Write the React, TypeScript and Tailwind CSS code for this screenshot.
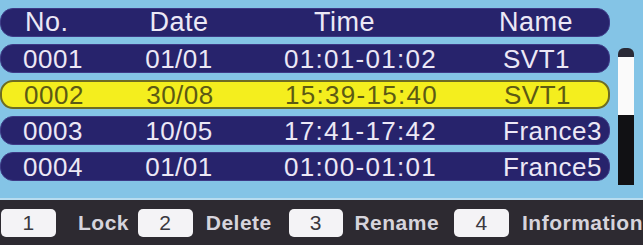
import React from "react";

const ROWS = [
  { no: "0001", date: "01/01", time: "01:01-01:02", name: "SVT1" },
  { no: "0002", date: "30/08", time: "15:39-15:40", name: "SVT1", active: true },
  { no: "0003", date: "10/05", time: "17:41-17:42", name: "France3" },
  { no: "0004", date: "01/01", time: "01:00-01:01", name: "France5" },
];

const FONT = { fontFamily: '"Liberation Sans", Arial, sans-serif' };

function Cells({ no, date, time, name }: { no: string; date: string; time: string; name: string }) {
  return (
    <>
      <span className="w-[120px] pl-[22px]">{no}</span>
      <span className="w-[116px] text-center">{date}</span>
      <span className="w-[262px] pl-[47px] tracking-[1.3px]">{time}</span>
      <span className="flex-1 pl-[4px] whitespace-nowrap">{name}</span>
    </>
  );
}

function Key({ n }: { n: string }) {
  return (
    <span className="flex h-[28px] w-[55px] items-center justify-center rounded-[5px] bg-[#f4f3f6] text-[21px] font-normal text-[#3a3840]">
      {n}
    </span>
  );
}

export default function App() {
  return (
    <div className="h-[245px] w-[643px] overflow-hidden bg-[#2d2a31]" style={FONT}>
      <div className="flex h-[198px] bg-[#84c4e6] pt-[8px]">
        <div className="flex w-[610px] flex-col gap-[7px]">
          <div className="flex h-[29px] items-center rounded-[13px] border border-[#3d3a86] bg-[#27236c] text-[27px] leading-none tracking-[0.5px] text-[#ece8f6]">
            <span className="w-[120px] pl-[24px]">No.</span>
            <span className="w-[116px] text-center">Date</span>
            <span className="w-[262px] pl-[77px]">Time</span>
            <span className="flex-1">Name</span>
          </div>
          {ROWS.map((r) => (
            <div
              key={r.no}
              className={
                r.active
                  ? "flex h-[29px] items-center rounded-[13px] border-2 border-[#6e6c22] bg-[#f4ee1e] text-[26px] leading-none tracking-[0.5px] text-[#5c5a14]"
                  : "flex h-[29px] items-center rounded-[13px] border border-[#3d3a86] bg-[#27236c] text-[26px] leading-none tracking-[0.5px] text-[#ece8f6]"
              }
            >
              <Cells {...r} />
            </div>
          ))}
        </div>
        <div className="ml-[8px] mt-[40px] flex w-[16px] flex-col">
          <div className="h-[9px] rounded-t-[6px] bg-[#2a2a36]" />
          <div className="h-[58px] bg-[#fafafa]" />
          <div className="h-[70px] bg-[#111114]" />
        </div>
      </div>
      <div className="h-[2px] bg-[#b8dcef]" />
      <div className="flex h-[45px] items-center pt-[1px] text-[21px] font-bold tracking-[0.5px] text-[#d6d4dc]">
        <span className="ml-[1px]">
          <Key n="1" />
        </span>
        <span className="ml-[22px] w-[60px]">Lock</span>
        <Key n="2" />
        <span className="ml-[13px] w-[83px]">Delete</span>
        <Key n="3" />
        <span className="ml-[11px] w-[100px]">Rename</span>
        <Key n="4" />
        <span className="ml-[13px] whitespace-nowrap">Information</span>
      </div>
    </div>
  );
}
